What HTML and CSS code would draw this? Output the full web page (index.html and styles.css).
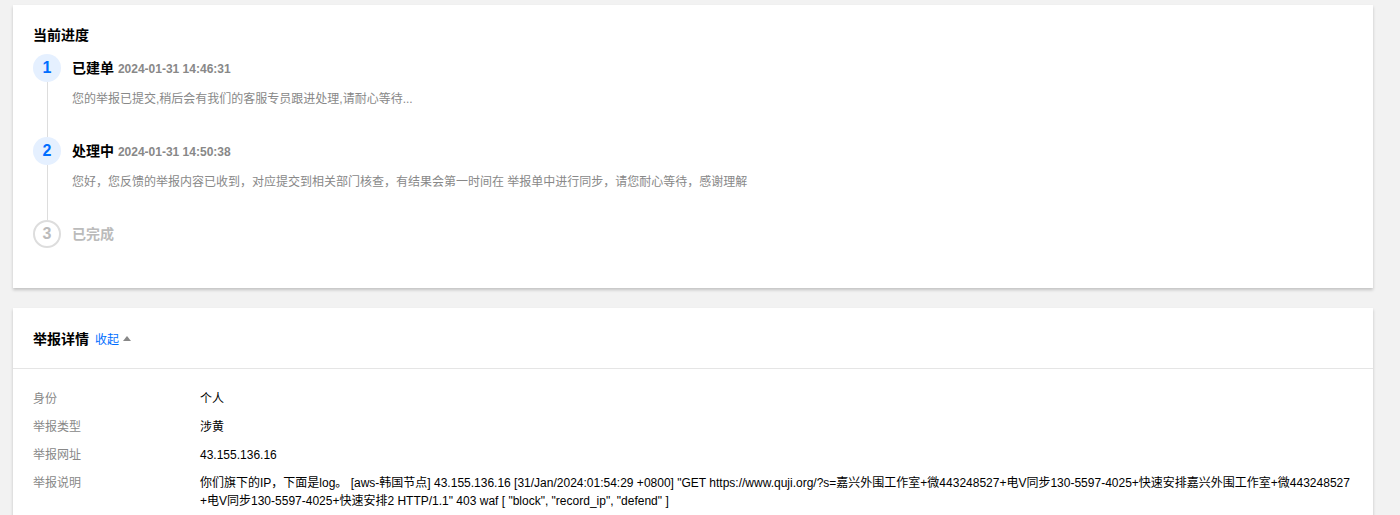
FILE: index.html
```html
<!DOCTYPE html>
<html lang="zh-CN">
<head>
    <meta charset="UTF-8">
    <meta name="viewport" content="width=device-width, initial-scale=1.0">
    <title>举报详情</title>
    <link rel="stylesheet" href="styles.css">
</head>
<body>
    <div class="page-container">
        <div class="card progress-card">
            <div class="card-title">当前进度</div>

            <div class="step done">
                <div class="step-side">
                    <div class="step-num">1</div>
                    <div class="step-line"></div>
                </div>
                <div class="step-body">
                    <div class="step-title">已建单 <span class="step-time">2024-01-31 14:46:31</span></div>
                    <div class="step-desc">您的举报已提交,稍后会有我们的客服专员跟进处理,请耐心等待...</div>
                </div>
            </div>

            <div class="step done">
                <div class="step-side">
                    <div class="step-num">2</div>
                    <div class="step-line"></div>
                </div>
                <div class="step-body">
                    <div class="step-title">处理中 <span class="step-time">2024-01-31 14:50:38</span></div>
                    <div class="step-desc">您好，您反馈的举报内容已收到，对应提交到相关部门核查，有结果会第一时间在 举报单中进行同步，请您耐心等待，感谢理解</div>
                </div>
            </div>

            <div class="step todo last">
                <div class="step-side">
                    <div class="step-num">3</div>
                </div>
                <div class="step-body">
                    <div class="step-title">已完成</div>
                </div>
            </div>
        </div>

        <div class="card detail-card">
            <div class="detail-header">
                <span class="detail-title">举报详情</span>
                <a class="toggle" href="#">收起</a>
                <span class="arrow-up"></span>
            </div>
            <div class="detail-body">
                <div class="row">
                    <div class="row-label">身份</div>
                    <div class="row-value">个人</div>
                </div>
                <div class="row">
                    <div class="row-label">举报类型</div>
                    <div class="row-value">涉黄</div>
                </div>
                <div class="row">
                    <div class="row-label">举报网址</div>
                    <div class="row-value">43.155.136.16</div>
                </div>
                <div class="row">
                    <div class="row-label">举报说明</div>
                    <div class="row-value">你们旗下的IP，下面是log。 [aws-韩国节点] 43.155.136.16 [31/Jan/2024:01:54:29 +0800] "GET https://www.quji.org/?s=嘉兴外围工作室+微443248527+电V同步130-5597-4025+快速安排嘉兴外围工作室+微443248527<br>+电V同步130-5597-4025+快速安排2 HTTP/1.1" 403 waf [ "block", "record_ip", "defend" ]</div>
                </div>
            </div>
        </div>
    </div>
</body>
</html>
```

FILE: styles.css
```css
body {
    margin: 0;
    background-color: #f2f2f2;
    font-family: "Liberation Sans", Arial, "Noto Sans CJK SC", sans-serif;
    font-size: 12px;
    color: #000;
}

.page-container {
    display: flex;
    flex-direction: column;
    gap: 20px;
    padding: 5px 27px 0 13px;
}

.card {
    background-color: #fff;
    box-shadow: 0 2px 3px rgba(0, 0, 0, 0.2);
}

/* 当前进度 */
.progress-card {
    padding: 20px 20px 40px;
}

.card-title {
    font-size: 14px;
    font-weight: bold;
    line-height: 20px;
    margin-bottom: 9px;
}

.step {
    display: flex;
    height: 83px;
}

.step.last {
    height: 28px;
}

.step-side {
    display: flex;
    flex-direction: column;
    align-items: center;
    width: 28px;
}

.step-num {
    width: 28px;
    height: 28px;
    border-radius: 50%;
    box-sizing: border-box;
    display: flex;
    justify-content: center;
    align-items: center;
    font-size: 16px;
    font-weight: bold;
}

.done .step-num {
    background-color: #e5f0ff;
    color: #006eff;
}

.todo .step-num {
    border: 2px solid #ddd;
    color: #bbb;
}

.step-line {
    flex: 1;
    width: 1px;
    background-color: #ddd;
}

.step-body {
    padding-left: 11px;
}

.step-title {
    font-size: 14px;
    font-weight: bold;
    line-height: 28px;
}

.todo .step-title {
    color: #bbb;
}

.step-time {
    font-size: 12px;
    color: #888;
}

.step-desc {
    margin-top: 6px;
    line-height: 20px;
    color: #888;
}

/* 举报详情 */
.detail-header {
    display: flex;
    align-items: center;
    height: 60px;
    padding: 0 20px;
    border-bottom: 1px solid #e5e5e5;
}

.detail-title {
    font-size: 14px;
    font-weight: bold;
}

.toggle {
    margin-left: 6px;
    color: #006eff;
    text-decoration: none;
}

.arrow-up {
    margin-left: 4px;
    width: 0;
    height: 0;
    border-left: 4px solid transparent;
    border-right: 4px solid transparent;
    border-bottom: 5px solid #888;
}

.detail-body {
    padding: 21px 14px 10px 20px;
}

.row {
    display: flex;
    line-height: 18px;
    margin-bottom: 10px;
}

.row-label {
    flex: 0 0 167px;
    color: #888;
}

.row-value {
    flex: 1;
    color: #000;
}
```
